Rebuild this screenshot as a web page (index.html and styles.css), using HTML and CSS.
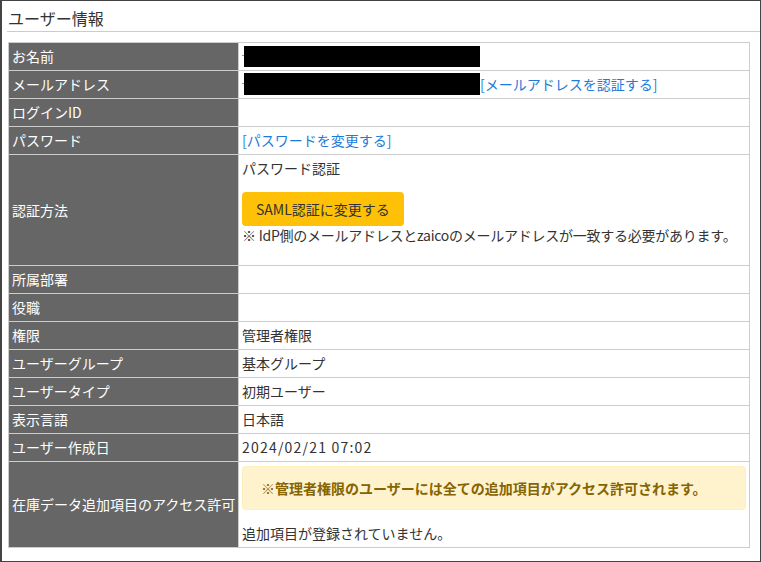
FILE: index.html
```html
<!DOCTYPE html>
<html lang="ja">
<head>
<meta charset="utf-8">
<title>ユーザー情報</title>
<link rel="stylesheet" href="styles.css">
</head>
<body>
<div class="panel">
  <h2 class="panel-title">ユーザー情報</h2>
  <table class="info">
    <colgroup><col class="c-label"><col class="c-value"></colgroup>
    <tr><th>お名前</th><td><span class="dash"></span><span class="redact"></span></td></tr>
    <tr><th>メールアドレス</th><td><span class="dash"></span><span class="redact r2"></span><a class="link" href="#">[メールアドレスを認証する]</a></td></tr>
    <tr><th>ログインID</th><td></td></tr>
    <tr><th>パスワード</th><td><a class="link" href="#">[パスワードを変更する]</a></td></tr>
    <tr><th>認証方法</th><td>
      <div>パスワード認証</div>
      <div class="btn-wrap"><button class="btn-saml" type="button">SAML認証に変更する</button></div>
      <div class="note">※ IdP側のメールアドレスとzaicoのメールアドレスが一致する必要があります。</div>
    </td></tr>
    <tr><th>所属部署</th><td></td></tr>
    <tr><th>役職</th><td></td></tr>
    <tr><th>権限</th><td>管理者権限</td></tr>
    <tr><th>ユーザーグループ</th><td>基本グループ</td></tr>
    <tr><th>ユーザータイプ</th><td>初期ユーザー</td></tr>
    <tr><th>表示言語</th><td>日本語</td></tr>
    <tr><th>ユーザー作成日</th><td><span class="date">2024/02/21 07:02</span></td></tr>
    <tr><th>在庫データ追加項目のアクセス許可</th><td>
      <div class="alert">※管理者権限のユーザーには全ての追加項目がアクセス許可されます。</div>
      <div class="after-alert">追加項目が登録されていません。</div>
    </td></tr>
  </table>
</div>
</body>
</html>
```
FILE: styles.css
```css
html, body {
  margin: 0;
  padding: 0;
  background: #fff;
}
body {
  font-family: "Noto Sans CJK JP", "Noto Sans", sans-serif;
  font-size: 14px;
  color: #333;
}
.panel {
  width: 761px;
  height: 562px;
  box-sizing: border-box;
  border: 1px solid #444;
  border-left-width: 2px;
  overflow: hidden;
}
.panel-title {
  margin: 0 0 0 5px;
  padding: 4px 0 0 1px;
  height: 26px;
  line-height: 26px;
  font-size: 16px;
  font-weight: normal;
  color: #333;
  border-bottom: 1px solid #ccc;
}
.info {
  margin: 10px 0 0 6px;
  width: 742px;
  border-collapse: collapse;
  table-layout: fixed;
}
.c-label { width: 230px; }
.info th, .info td {
  border: 1px solid #ccc;
  padding: 4px 3px;
  height: 19px;
  line-height: 19px;
  vertical-align: middle;
  text-align: left;
}
.info th {
  background: #666;
  color: #fff;
  font-weight: normal;
  padding-left: 3px;
  white-space: nowrap;
}
.info td {
  color: #333;
  white-space: nowrap;
}
.dash {
  display: inline-block;
  width: 2px;
  height: 1px;
  background: #999;
  vertical-align: top;
  margin-top: 8px;
}
.redact {
  display: inline-block;
  width: 236px;
  height: 21px;
  margin: -1px 0 -1px;
  background: #000;
  vertical-align: top;
}
.r2 { height: 22px; margin: -2px 0 -1px; }
.link {
  color: #1f7bd9;
  text-decoration: none;
}
.btn-wrap {
  margin-top: 14px;
}
.btn-saml {
  display: block;
  height: 34px;
  padding: 0 14px;
  border: none;
  border-radius: 4px;
  background: #ffc107;
  color: #333;
  font-family: inherit;
  font-size: 14px;
  line-height: 34px;
}
.note {
  margin-bottom: 16px;
  letter-spacing: -0.25px;
}
.date {
  letter-spacing: 1.2px;
}
.alert {
  background: #fff3cd;
  border: 1px solid #ffeeba;
  border-radius: 4px;
  padding: 12px 18px 12px 18px;
  line-height: 18px;
  color: #856404;
  font-weight: bold;
}
.after-alert {
  margin-top: 14px;
}
```
